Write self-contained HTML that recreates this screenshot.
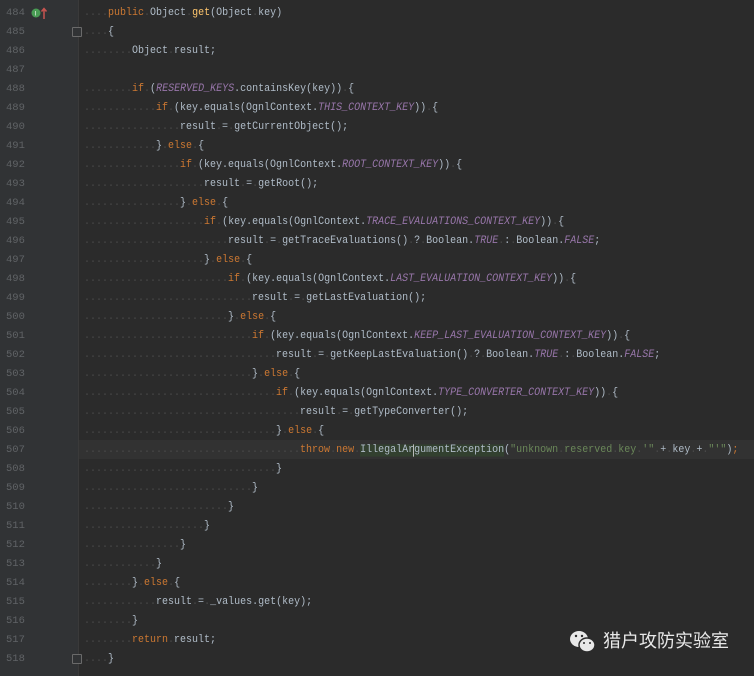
<!DOCTYPE html>
<html><head><meta charset="utf-8"><style>
body{margin:0;width:754px;height:676px;background:#2b2b2b;overflow:hidden;position:relative;font-family:"Liberation Mono",monospace;}
#gut{position:absolute;left:0;top:0;width:78px;height:676px;background:#313335;border-right:1px solid #3a3a3a}
.ln{position:absolute;left:6px;width:24px;color:#606366;font-size:10.5px;line-height:19px}
.row{position:absolute;left:84px;font-size:10px;line-height:19px;color:#b0bcc8;white-space:pre;transform:scaleY(1.12);transform-origin:0 50%}
.k{color:#cc7832}.m{color:#ffc66d}.c{color:#9876aa;font-style:italic}.s{color:#6a8759}.d{color:#4a4a4a}
#cur{position:absolute;left:79px;top:440px;width:675px;height:19px;background:#323232}
.hl{background:#32402f}
.fold{position:absolute;left:72px;width:8px;height:8px;border:1px solid #6a6a6a;border-radius:1px;background:#313335}
</style></head><body>
<div id="gut"></div>
<div id="cur"></div>
<div class="fold" style="top:27px"></div>
<div class="fold" style="top:654px"></div>
<svg style="position:absolute;left:30px;top:6px" width="20" height="14"><circle cx="6" cy="7" r="4.5" fill="#499c54"/><text x="4.5" y="9.5" font-size="6" fill="#fff" font-family="Liberation Sans">I</text><path d="M14 13V3M11.5 5.5L14 2.5L16.5 5.5" stroke="#c75450" stroke-width="1.5" fill="none"/></svg>
<div style="position:absolute;left:0;top:0">
<div class="ln" style="top:4px">484</div><div class="ln" style="top:23px">485</div><div class="ln" style="top:42px">486</div><div class="ln" style="top:61px">487</div><div class="ln" style="top:80px">488</div><div class="ln" style="top:99px">489</div><div class="ln" style="top:118px">490</div><div class="ln" style="top:137px">491</div><div class="ln" style="top:156px">492</div><div class="ln" style="top:175px">493</div><div class="ln" style="top:194px">494</div><div class="ln" style="top:213px">495</div><div class="ln" style="top:232px">496</div><div class="ln" style="top:251px">497</div><div class="ln" style="top:270px">498</div><div class="ln" style="top:289px">499</div><div class="ln" style="top:308px">500</div><div class="ln" style="top:327px">501</div><div class="ln" style="top:346px">502</div><div class="ln" style="top:365px">503</div><div class="ln" style="top:384px">504</div><div class="ln" style="top:403px">505</div><div class="ln" style="top:422px">506</div><div class="ln" style="top:441px">507</div><div class="ln" style="top:460px">508</div><div class="ln" style="top:479px">509</div><div class="ln" style="top:498px">510</div><div class="ln" style="top:517px">511</div><div class="ln" style="top:536px">512</div><div class="ln" style="top:555px">513</div><div class="ln" style="top:574px">514</div><div class="ln" style="top:593px">515</div><div class="ln" style="top:612px">516</div><div class="ln" style="top:631px">517</div><div class="ln" style="top:650px">518</div>
</div>
<div class="row" style="top:4px"><span class="d">....</span><span class="k">public</span><span class="d">.</span>Object<span class="d">.</span><span class="m">get</span>(Object<span class="d">.</span>key)</div>
<div class="row" style="top:23px"><span class="d">....</span>{</div>
<div class="row" style="top:42px"><span class="d">........</span>Object<span class="d">.</span>result;</div>
<div class="row" style="top:80px"><span class="d">........</span><span class="k">if</span><span class="d">.</span>(<span class="c">RESERVED_KEYS</span>.containsKey(key))<span class="d">.</span>{</div>
<div class="row" style="top:99px"><span class="d">............</span><span class="k">if</span><span class="d">.</span>(key.equals(OgnlContext.<span class="c">THIS_CONTEXT_KEY</span>))<span class="d">.</span>{</div>
<div class="row" style="top:118px"><span class="d">................</span>result<span class="d">.</span>=<span class="d">.</span>getCurrentObject();</div>
<div class="row" style="top:137px"><span class="d">............</span>}<span class="d">.</span><span class="k">else</span><span class="d">.</span>{</div>
<div class="row" style="top:156px"><span class="d">................</span><span class="k">if</span><span class="d">.</span>(key.equals(OgnlContext.<span class="c">ROOT_CONTEXT_KEY</span>))<span class="d">.</span>{</div>
<div class="row" style="top:175px"><span class="d">....................</span>result<span class="d">.</span>=<span class="d">.</span>getRoot();</div>
<div class="row" style="top:194px"><span class="d">................</span>}<span class="d">.</span><span class="k">else</span><span class="d">.</span>{</div>
<div class="row" style="top:213px"><span class="d">....................</span><span class="k">if</span><span class="d">.</span>(key.equals(OgnlContext.<span class="c">TRACE_EVALUATIONS_CONTEXT_KEY</span>))<span class="d">.</span>{</div>
<div class="row" style="top:232px"><span class="d">........................</span>result<span class="d">.</span>=<span class="d">.</span>getTraceEvaluations()<span class="d">.</span>?<span class="d">.</span>Boolean.<span class="c">TRUE</span><span class="d">.</span>:<span class="d">.</span>Boolean.<span class="c">FALSE</span>;</div>
<div class="row" style="top:251px"><span class="d">....................</span>}<span class="d">.</span><span class="k">else</span><span class="d">.</span>{</div>
<div class="row" style="top:270px"><span class="d">........................</span><span class="k">if</span><span class="d">.</span>(key.equals(OgnlContext.<span class="c">LAST_EVALUATION_CONTEXT_KEY</span>))<span class="d">.</span>{</div>
<div class="row" style="top:289px"><span class="d">............................</span>result<span class="d">.</span>=<span class="d">.</span>getLastEvaluation();</div>
<div class="row" style="top:308px"><span class="d">........................</span>}<span class="d">.</span><span class="k">else</span><span class="d">.</span>{</div>
<div class="row" style="top:327px"><span class="d">............................</span><span class="k">if</span><span class="d">.</span>(key.equals(OgnlContext.<span class="c">KEEP_LAST_EVALUATION_CONTEXT_KEY</span>))<span class="d">.</span>{</div>
<div class="row" style="top:346px"><span class="d">................................</span>result<span class="d">.</span>=<span class="d">.</span>getKeepLastEvaluation()<span class="d">.</span>?<span class="d">.</span>Boolean.<span class="c">TRUE</span><span class="d">.</span>:<span class="d">.</span>Boolean.<span class="c">FALSE</span>;</div>
<div class="row" style="top:365px"><span class="d">............................</span>}<span class="d">.</span><span class="k">else</span><span class="d">.</span>{</div>
<div class="row" style="top:384px"><span class="d">................................</span><span class="k">if</span><span class="d">.</span>(key.equals(OgnlContext.<span class="c">TYPE_CONVERTER_CONTEXT_KEY</span>))<span class="d">.</span>{</div>
<div class="row" style="top:403px"><span class="d">....................................</span>result<span class="d">.</span>=<span class="d">.</span>getTypeConverter();</div>
<div class="row" style="top:422px"><span class="d">................................</span>}<span class="d">.</span><span class="k">else</span><span class="d">.</span>{</div>
<div class="row" style="top:441px"><span class="d">....................................</span><span class="k">throw</span><span class="d">.</span><span class="k">new</span><span class="d">.</span><span class="hl">IllegalAr<span style="border-left:1px solid #bbb;margin-left:-1px"></span>gumentException</span>(<span class="s">"unknown<span class="d">.</span>reserved<span class="d">.</span>key<span class="d">.</span>'"</span><span class="d">.</span>+<span class="d">.</span>key<span class="d">.</span>+<span class="d">.</span><span class="s">"'"</span>)<span class="k">;</span></div>
<div class="row" style="top:460px"><span class="d">................................</span>}</div>
<div class="row" style="top:479px"><span class="d">............................</span>}</div>
<div class="row" style="top:498px"><span class="d">........................</span>}</div>
<div class="row" style="top:517px"><span class="d">....................</span>}</div>
<div class="row" style="top:536px"><span class="d">................</span>}</div>
<div class="row" style="top:555px"><span class="d">............</span>}</div>
<div class="row" style="top:574px"><span class="d">........</span>}<span class="d">.</span><span class="k">else</span><span class="d">.</span>{</div>
<div class="row" style="top:593px"><span class="d">............</span>result<span class="d">.</span>=<span class="d">.</span>_values.get(key);</div>
<div class="row" style="top:612px"><span class="d">........</span>}</div>
<div class="row" style="top:631px"><span class="d">........</span><span class="k">return</span><span class="d">.</span>result;</div>
<div class="row" style="top:650px"><span class="d">....</span>}</div>
<svg style="position:absolute;left:569px;top:629px" width="30" height="26"><ellipse cx="10" cy="10" rx="9" ry="8" fill="#e8e8e8"/><ellipse cx="18" cy="16" rx="8" ry="7" fill="#e8e8e8" stroke="#2b2b2b" stroke-width="1.5"/><circle cx="7" cy="7" r="1.2" fill="#2b2b2b"/><circle cx="13" cy="7" r="1.2" fill="#2b2b2b"/><circle cx="15" cy="14" r="1" fill="#2b2b2b"/><circle cx="21" cy="14" r="1" fill="#2b2b2b"/></svg>
<div style="position:absolute;left:603px;top:629px;font-family:'Liberation Sans','Noto Sans CJK SC',sans-serif;font-size:18px;line-height:24px;color:#e8e8e8">猎户攻防实验室</div>
</body></html>
